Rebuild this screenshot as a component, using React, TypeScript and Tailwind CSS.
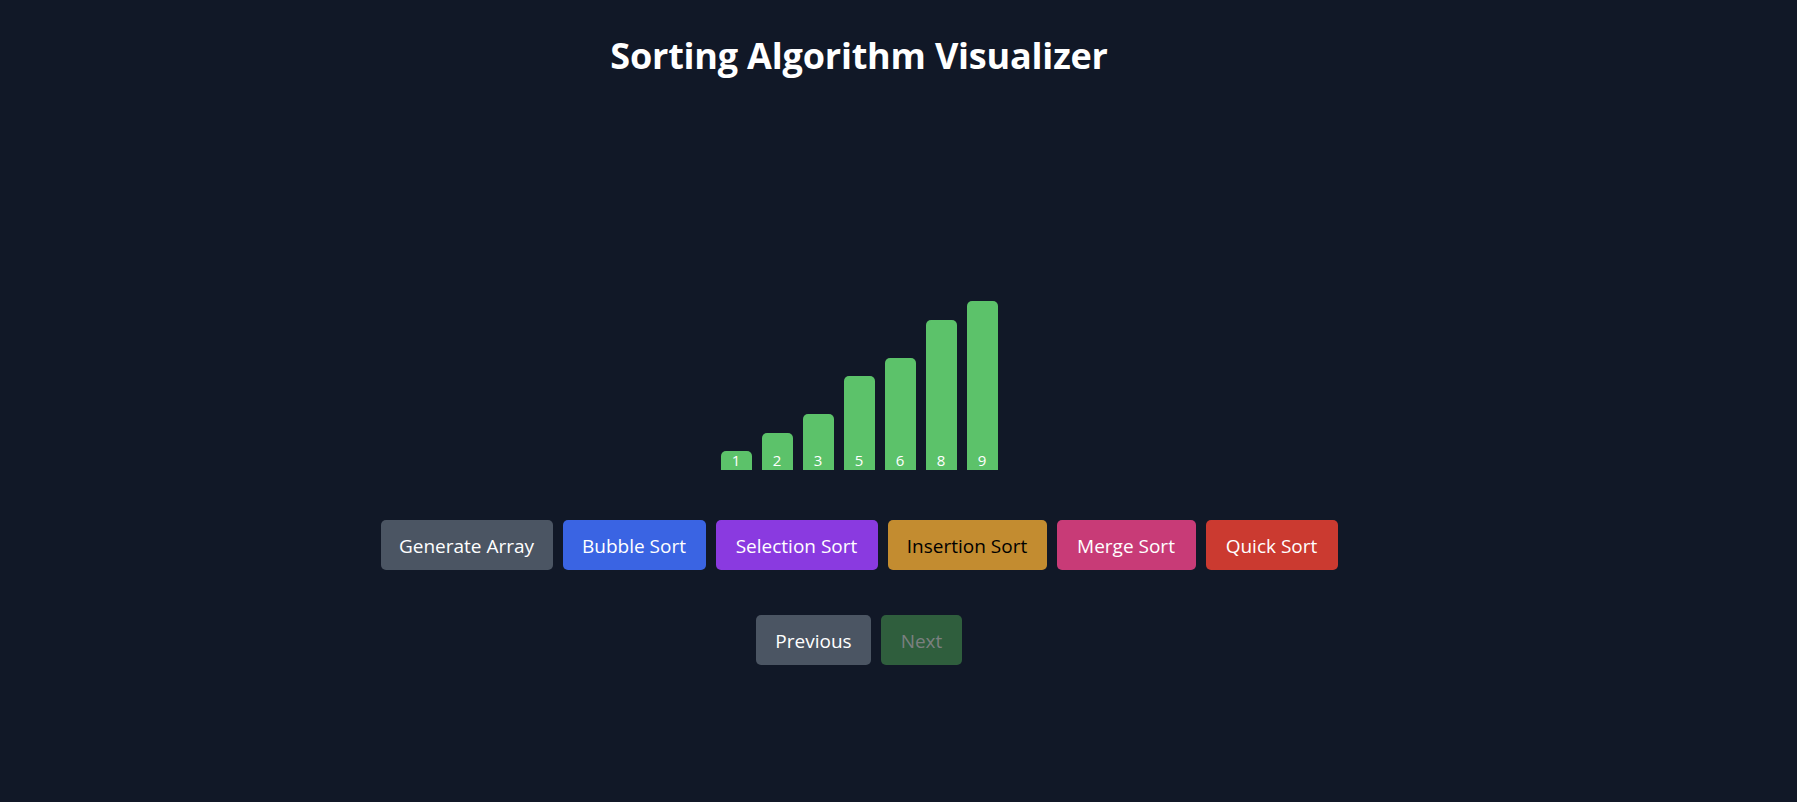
import React from "react"

const values = [1, 2, 3, 5, 6, 8, 9]

const algoButtons = [
  { label: "Generate Array", cls: "w-[172px] bg-[#4b5563] text-white" },
  { label: "Bubble Sort", cls: "w-[143px] bg-[#3a64e3] text-white" },
  { label: "Selection Sort", cls: "w-[162px] bg-[#8a3ae0] text-white" },
  { label: "Insertion Sort", cls: "w-[159px] bg-[#c38c30] text-black" },
  { label: "Merge Sort", cls: "w-[139px] bg-[#c83b77] text-white" },
  { label: "Quick Sort", cls: "w-[132px] bg-[#cb3a30] text-white" },
]

const Bar = ({ value }: { value: number }) => (
  <div
    className="w-[31px] bg-[#5cc26a] rounded-t-[5px] flex items-end justify-center"
    style={{ height: `${value * 18.75}px` }}
  >
    <span className="text-[15px] leading-[20px] text-white">{value}</span>
  </div>
)

const App = () => {
  return (
    <div
      className="min-h-[802px] bg-[#111827] text-white pr-[79px] pt-[33px] flex flex-col items-center"
      style={{ fontFamily: '"Open Sans", "Noto Sans", sans-serif' }}
    >
      <h1 className="text-[36px] leading-[45px] font-bold tracking-[-0.2px]">
        Sorting Algorithm Visualizer
      </h1>

      <div className="mt-[17px] h-[375px] flex items-end gap-[10px]">
        {values.map((v) => (
          <Bar key={v} value={v} />
        ))}
      </div>

      <div className="mt-[50px] flex gap-[10px]">
        {algoButtons.map((b) => (
          <button
            key={b.label}
            className={`${b.cls} h-[50px] pt-[2px] rounded-[5px] text-[19px] flex items-center justify-center`}
          >
            {b.label}
          </button>
        ))}
      </div>

      <div className="mt-[45px] flex gap-[10px]">
        <button className="w-[115px] h-[50px] pt-[2px] rounded-[5px] bg-[#4b5563] text-white text-[19px]">
          Previous
        </button>
        <button className="w-[81px] h-[50px] pt-[2px] rounded-[5px] bg-[#2f5e3d] text-[#7b8080] text-[19px]">
          Next
        </button>
      </div>
    </div>
  )
}

export default App
